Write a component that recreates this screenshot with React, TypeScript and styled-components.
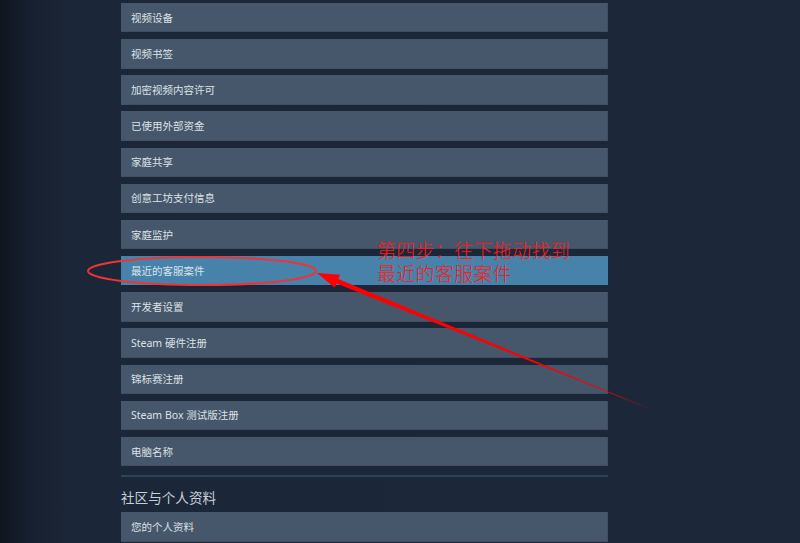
import React from "react";
import styled, { createGlobalStyle } from "styled-components";

const Global = createGlobalStyle`
  html, body { margin: 0; padding: 0; }
  body {
    width: 800px;
    height: 543px;
    overflow: hidden;
    background: linear-gradient(to right, #10161f 0px, #172030 30px, #1b2638 70px, #1c2739 100%);
    font-family: "Noto Sans", "Noto Sans CJK SC", sans-serif;
  }
`;

const Page = styled.div`
  position: relative;
  width: 800px;
  height: 543px;
  overflow: hidden;
`;

const Column = styled.div`
  width: 487px;
  margin-left: 121px;
  padding-top: 3px;
  display: flex;
  flex-direction: column;
`;

const List = styled.div`
  display: flex;
  flex-direction: column;
  gap: 6.77px;
`;

const Row = styled.div<{ $active?: boolean }>`
  height: 29.4px;
  flex-shrink: 0;
  box-sizing: border-box;
  display: flex;
  align-items: center;
  padding-left: 10px;
  background: ${(p) => (p.$active ? "#4682aa" : "#46566b")};
  border-right: 1px solid ${(p) => (p.$active ? "#4682aa" : "#3f4e62")};
  border-bottom: 1px solid ${(p) => (p.$active ? "#4682aa" : "#404f63")};
  color: #dde2e7;
  font-size: 10.5px;
  font-family: "Noto Sans", "Noto Sans CJK SC", sans-serif;
`;

const Divider = styled.div`
  height: 2px;
  background: #2a4559;
  margin-top: 9px;
`;

const SectionTitle = styled.div`
  height: 35px;
  display: flex;
  align-items: center;
  padding-top: 5px;
  box-sizing: border-box;
  color: #c7d0d9;
  font-size: 13.6px;
  font-family: "Noto Sans", "Noto Sans CJK SC", sans-serif;
`;

const Overlay = styled.svg`
  position: absolute;
  left: 0;
  top: 0;
  pointer-events: none;
`;

const Note = styled.div`
  position: absolute;
  left: 377px;
  top: 240px;
  display: flex;
  flex-direction: column;
  gap: 3px;
  color: #ff1a1a;
  font-size: 19px;
  line-height: 19.5px;
  font-weight: 300;
  font-family: "Noto Sans CJK SC", sans-serif;
  letter-spacing: 0.3px;
  white-space: nowrap;
`;

const NoteLine = styled.span`
  display: block;
  height: 19.5px;
`;

const items = [
  "视频设备",
  "视频书签",
  "加密视频内容许可",
  "已使用外部资金",
  "家庭共享",
  "创意工坊支付信息",
  "家庭监护",
  "最近的客服案件",
  "开发者设置",
  "Steam 硬件注册",
  "锦标赛注册",
  "Steam Box 测试版注册",
  "电脑名称",
];

export default function App() {
  return (
    <Page>
      <Global />
      <Column>
        <List>
          {items.map((t) => (
            <Row key={t} $active={t === "最近的客服案件"}>
              {t}
            </Row>
          ))}
        </List>
        <Divider />
        <SectionTitle>社区与个人资料</SectionTitle>
        <List>
          <Row>您的个人资料</Row>
        </List>
      </Column>
      <Overlay width="800" height="543" viewBox="0 0 800 543">
        <ellipse cx="202" cy="271" rx="114" ry="14" fill="none" stroke="#ee3434" strokeWidth="2" />
        <polygon
          points="317,273 340,274.8 338.3,279 650.1,408.9 649.9,409.1 336.5,283.6 334.8,287.8"
          fill="#ff0000"
        />
      </Overlay>
      <Note>
        <NoteLine>第四步：往下拖动找到</NoteLine>
        <NoteLine>最近的客服案件</NoteLine>
      </Note>
    </Page>
  );
}
